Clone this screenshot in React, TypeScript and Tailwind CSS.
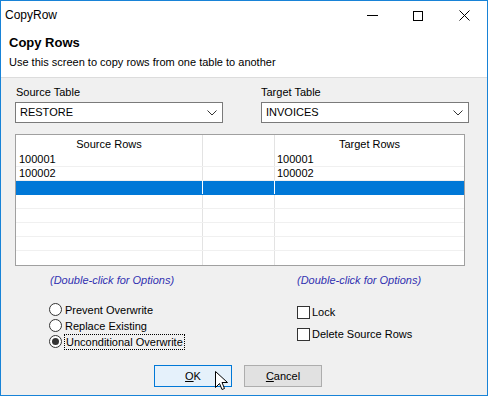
import React from "react";

const font = "font-['Segoe_UI','Liberation_Sans',sans-serif]";

const rows = [
  { src: "100001", tgt: "100001" },
  { src: "100002", tgt: "100002" },
  { src: "", tgt: "", selected: true },
  { src: "", tgt: "" },
  { src: "", tgt: "" },
  { src: "", tgt: "" },
  { src: "", tgt: "" },
  { src: "", tgt: "" },
];

function Chevron() {
  return (
    <svg width="10" height="6" viewBox="0 0 10 6" className="mr-[5px]">
      <polyline points="0.5,0.5 5,5 9.5,0.5" fill="none" stroke="#333" strokeWidth="1" />
    </svg>
  );
}

function Combo({ value }: { value: string }) {
  return (
    <div className="h-[21px] w-[208px] border border-[#7a7a7a] bg-white flex items-center justify-between pl-[4px]">
      <span>{value}</span>
      <Chevron />
    </div>
  );
}

function Radio({ label, checked, focus }: { label: string; checked?: boolean; focus?: boolean }) {
  return (
    <div className="flex items-center h-[15px] gap-[2px]">
      <div className="w-[13px] h-[13px] rounded-full border border-[#333] bg-white flex items-center justify-center">
        {checked && <div className="w-[7px] h-[7px] rounded-full bg-[#333]" />}
      </div>
      <span className={focus ? "border border-dotted border-black px-[1px] leading-[14px]" : "px-[1px] leading-[14px]"}>
        {label}
      </span>
    </div>
  );
}

function Check({ label }: { label: string }) {
  return (
    <div className="flex items-center gap-[2px]">
      <div className="w-[13px] h-[13px] border border-[#333] bg-white" />
      <span className="leading-[14px]">{label}</span>
    </div>
  );
}

export default function App() {
  return (
    <div className={`w-[488px] h-[396px] border border-[#1883d7] bg-[#f0f0f0] flex flex-col relative text-[11px] text-black ${font}`}>
      {/* title bar */}
      <div className="h-[29px] bg-white flex items-center justify-between">
        <span className="pl-[4px] pb-[2px] text-[12px]">CopyRow</span>
        <div className="flex h-full">
          <div className="w-[46px] flex items-center justify-center">
            <div className="w-[11px] h-px bg-black" />
          </div>
          <div className="w-[46px] flex items-center justify-center">
            <div className="w-[10px] h-[10px] border border-black" />
          </div>
          <div className="w-[46px] flex items-center justify-center">
            <svg width="11" height="11" viewBox="0 0 11 11">
              <path d="M0.5 0.5 L10.5 10.5 M10.5 0.5 L0.5 10.5" stroke="#000" strokeWidth="1" />
            </svg>
          </div>
        </div>
      </div>

      {/* header */}
      <div className="h-[48px] bg-white border-b border-[#dcdcdc] pl-[8px] pt-[5px]">
        <div className="text-[13px] font-bold leading-[16px]">Copy Rows</div>
        <div className="leading-[16px] mt-[3px]">Use this screen to copy rows from one table to another</div>
      </div>

      {/* body */}
      <div className="pl-[14px] pt-[6px] flex flex-col">
        <div className="flex">
          <div className="w-[246px]">
            <div className="leading-[16px] pl-[1px] mb-[2px]">Source Table</div>
            <Combo value="RESTORE" />
          </div>
          <div>
            <div className="leading-[16px] mb-[2px]">Target Table</div>
            <Combo value="INVOICES" />
          </div>
        </div>

        {/* grid */}
        <div className="mt-[11px] w-[450px] border border-[#a0a0a0] bg-white">
          <div className="flex h-[18px] items-center">
            <div className="w-[187px] h-full text-center border-r border-[#e3e3e3] leading-[18px]">Source Rows</div>
            <div className="w-[72px] h-full border-r border-[#e3e3e3]" />
            <div className="flex-1 h-full text-center leading-[18px]">Target Rows</div>
          </div>
          {rows.map((r, i) => (
            <div
              key={i}
              className={`flex h-[14px] leading-[13px] overflow-hidden ${r.selected ? "bg-[#0078d7] border-b border-[#0078d7]" : "border-b border-[#f0f0f0]"} ${i === rows.length - 1 ? "border-b-0" : ""}`}
            >
              <div className={`w-[187px] pl-[3px] border-r ${r.selected ? "border-white" : "border-[#e3e3e3]"}`}>{r.src}</div>
              <div className={`w-[72px] border-r ${r.selected ? "border-white" : "border-[#e3e3e3]"}`} />
              <div className="flex-1 pl-[2px]">{r.tgt}</div>
            </div>
          ))}
        </div>

        <div className="flex mt-[6px] italic text-[#3030b0] leading-[16px]">
          <div className="w-[282px] pl-[35px]">(Double-click for Options)</div>
          <div>(Double-click for Options)</div>
        </div>

        <div className="flex mt-[14px]">
          <div className="w-[282px] pl-[34px] flex flex-col gap-[1px]">
            <Radio label="Prevent Overwrite" />
            <Radio label="Replace Existing" />
            <Radio label="Unconditional Overwrite" checked focus />
          </div>
          <div className="flex flex-col gap-[8px] pt-[3px]">
            <Check label="Lock" />
            <Check label="Delete Source Rows" />
          </div>
        </div>

        <div className="flex mt-[16px] pl-[139px] gap-[12px]">
          <div className="w-[78px] h-[22px] border border-[#0078d7] bg-[#e5f1fb] flex items-center justify-center">
            <span><span className="underline">O</span>K</span>
          </div>
          <div className="w-[78px] h-[22px] border border-[#adadad] bg-[#e1e1e1] flex items-center justify-center">
            <span><span className="underline">C</span>ancel</span>
          </div>
        </div>
      </div>

      {/* mouse cursor */}
      <svg className="absolute left-[214px] top-[370px]" width="14" height="22" viewBox="0 0 14 22">
        <path d="M0.5 0.5 L0.5 16.5 L4.5 12.5 L7 18.5 L9.5 17.5 L7 11.5 L12.5 11.5 Z" fill="#fff" stroke="#000" strokeWidth="1" />
      </svg>
    </div>
  );
}
